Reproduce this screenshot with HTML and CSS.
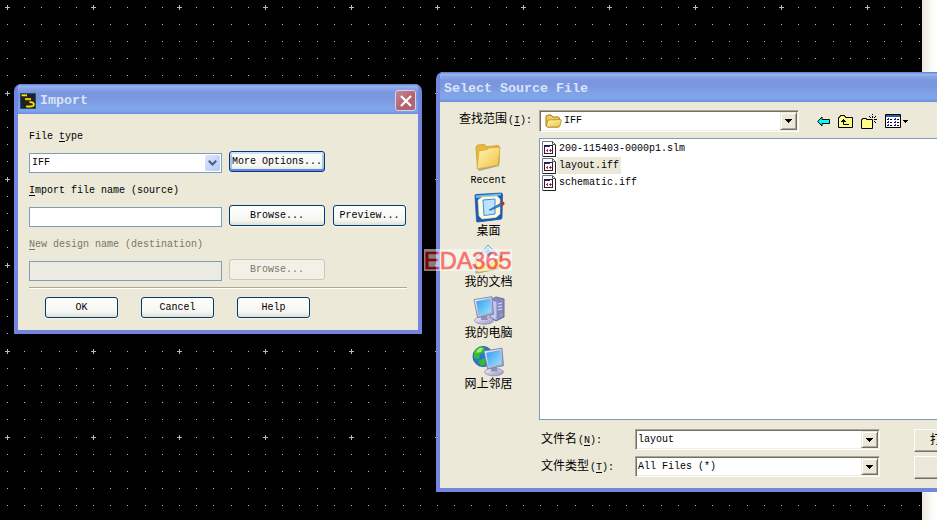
FILE: index.html
```html
<!DOCTYPE html>
<html lang="zh-CN">
<head>
<meta charset="utf-8">
<title>Import</title>
<link rel="stylesheet" href="styles.css">
</head>
<body>
<svg class="symbols" width="0" height="0" aria-hidden="true">
  <defs>
    <linearGradient id="gold" x1="0" y1="0" x2="1" y2="1"><stop offset="0" stop-color="#fff6b8"/><stop offset="1" stop-color="#f0c040"/></linearGradient>
    <linearGradient id="screen" x1="0" y1="0" x2="1" y2="1"><stop offset="0" stop-color="#2f9cf0"/><stop offset="1" stop-color="#9ee6ff"/></linearGradient>
    <linearGradient id="metal" x1="0" y1="0" x2="1" y2="1"><stop offset="0" stop-color="#f4f4fc"/><stop offset="1" stop-color="#9494c0"/></linearGradient>
    <pattern id="dither" width="2" height="2" patternUnits="userSpaceOnUse"><path d="M0 0h2v2H0z" fill="#ff6"/><path d="M0 0h1v1H0zM1 1h1v1H1z" fill="#fff9b0"/></pattern>
    <symbol id="file" viewBox="0 0 14 16">
      <path d="M.5.5h10l3 3v12H.5z" fill="#fff" stroke="#777"/><path d="M10.5.5v3h3" fill="none" stroke="#555"/><path d="M1 15.500h12.500V4" fill="none" stroke="#222"/>
      <path d="M2 4h9v9H2z" fill="#223"/><path d="M3 6h7v6H3z" fill="#fff"/><path d="M3 5h5v1H3z" fill="#22c"/><path d="M8 5h2v1H8z" fill="#fff"/><path d="M4 9h1V8h1v3H5v-1H4z" fill="#d22"/><path d="M7 9h1V8h1v1h1v1H9v1H8v-1H7z" fill="#e33"/><path d="M8 9h1v1H8z" fill="#22c"/>
    </symbol>
    <symbol id="drop" viewBox="0 0 7 4"><path d="M0 0h7v1H6v1H5v1H4v1H3V3H2V2H1V1H0z" fill="#000"/></symbol>
    <symbol id="monitor" viewBox="0 0 22 29">
      <ellipse cx="11" cy="24.500" rx="9.500" ry="3.800" fill="url(#metal)" stroke="#8585b2" stroke-width=".7"/><path d="M8 18h5l2 6H8z" fill="#8e90bb"/><path d="M1 3.500 19 .7l1.500 17.500-16 3.300z" fill="url(#metal)" stroke="#7178ad" stroke-width=".8"/><path d="M3.200 5.200 17.300 2.800l1.100 13.700-12.700 2.600z" fill="url(#screen)"/>
    </symbol>
  </defs>
</svg>
<main class="desktop">
  <svg class="grid" width="922" height="520">
    <defs><pattern id="dots" x="3" y="3" width="86" height="86" patternUnits="userSpaceOnUse">
      <g fill="#b8b8b8"><path d="M21 4h1v1h-1zM38 4h1v1h-1zM56 4h1v1h-1zM73 4h1v1h-1z"/>
      <path d="M4 21h1v1H4zM21 21h1v1h-1zM38 21h1v1h-1zM56 21h1v1h-1zM73 21h1v1h-1z"/>
      <path d="M4 38h1v1H4zM21 38h1v1h-1zM38 38h1v1h-1zM56 38h1v1h-1zM73 38h1v1h-1z"/>
      <path d="M4 55h1v1H4zM21 55h1v1h-1zM38 55h1v1h-1zM56 55h1v1h-1zM73 55h1v1h-1z"/>
      <path d="M4 72h1v1H4zM21 72h1v1h-1zM38 72h1v1h-1zM56 72h1v1h-1zM73 72h1v1h-1z"/>
      <path d="M2 4h5v1H2zM4 2h1v5H4z"/></g></pattern></defs>
    <rect width="922" height="520" fill="#000"/><rect width="922" height="520" fill="url(#dots)"/>
  </svg>

  <section class="window import">
    <header class="titlebar">
      <svg class="app-icon" width="16" height="16" viewBox="0 0 16 16"><path d="M.5.500h15v15H.5z" fill="#222220" stroke="#125080"/><path d="M2 2.500h5M5 6.200h6M9.500 9c3 0 4.500 1 4.500 2.500s-2 2-4 2H6.500" fill="none" stroke="#806500" stroke-width="2.400"/><path d="M1.500 2.300H7M5 6h6M9.500 9c3 0 4.300 1 4.300 2.400s-1.800 2-3.800 2H6" fill="none" stroke="#ffe000" stroke-width="1.500"/></svg>
      <h1 class="title">Import</h1>
      <span class="close"><svg width="12" height="12" viewBox="0 0 12 12"><path d="m1 1 10 10M11 1 1 11" stroke="#fff" stroke-width="2.200"/></svg></span>
    </header>
    <div class="body">
      <div class="block">
        <label class="label">File <u>t</u>ype</label>
        <div class="fields">
          <div class="field">IFF<span class="xp-drop"><svg width="9" height="6" viewBox="0 0 9 6"><path d="m.8.800 3.700 3.700L8.200.8" fill="none" stroke="#4d6185" stroke-width="2.200"/></svg></span></div>
          <span class="button wide focused">More Options...</span>
        </div>
      </div>
      <div class="block">
        <label class="label"><u>I</u>mport file name (source)</label>
        <div class="fields"><div class="field"></div><span class="button wide">Browse...</span><span class="button">Preview...</span></div>
      </div>
      <div class="block disabled">
        <label class="label"><u>N</u>ew design name (destination)</label>
        <div class="fields"><div class="field"></div><span class="button wide">Browse...</span></div>
      </div>
      <div class="rule"></div>
      <div class="actions"><span class="button">OK</span><span class="button">Cancel</span><span class="button">Help</span></div>
    </div>
  </section>

  <section class="window select">
    <header class="titlebar"><h2 class="title">Select Source File</h2></header>
    <div class="chooser">
      <div class="lookup">
        <span class="lookup-label">查找范围<i>(<u>I</u>):</i></span>
        <div class="combo folder-combo">
          <svg width="17" height="14" viewBox="0 0 17 14"><path d="M1 3q0-2 2-2h3l2 2h5q1.500 0 1.500 2v7q-.5 1-1.500 1H3q-2 0-2-2z" fill="#f2cc54" stroke="#a57b13"/><path d="m3 6 12.500-.5q1 0 .7 1.500l-1.400 5q-.3 1-1.300 1H2q-1-.5-.5-2z" fill="url(#gold)" stroke="#b38a22" stroke-width=".8"/></svg>
          <span class="combo-text">IFF</span><span class="combo-button"><svg width="7" height="4"><use href="#drop"/></svg></span>
        </div>
        <div class="tools">
          <svg width="13" height="11" viewBox="0 0 13 11"><path d="M.7 5.500 5 1v2.500h7.500v4H5V10z" fill="#00ffff" stroke="#000"/></svg>
          <svg width="15" height="13" viewBox="0 0 15 13"><path d="M.5 2.500h1v-1h1v-1h4v1h1v1h7v10H.5z" fill="url(#dither)" stroke="#000"/><path d="M5.500 5v4.500H11M3 6.500h5M4 5.500h3M5 4.500h1" fill="none" stroke="#000"/></svg>
          <svg width="16" height="15" viewBox="0 0 16 15"><path d="M.5 5.500h1v-1h4v1h6v9H.5z" fill="url(#dither)" stroke="#000"/><path d="M11.500 0v1M11.500 2v2M8 2l2 2M15 2l-2 2M8 5.500h2M13 5.500h3M13 7l2 2M11.500 7v2" stroke="#000"/></svg>
          <span class="view"><svg width="16" height="14" viewBox="0 0 16 14"><path d="M.5.500h15v13H.5z" fill="#fff" stroke="#000"/><path d="M1 1h14v2H1z" fill="#2860a8"/><path d="M2 5h2v1H2zM2 8h2v1H2zM2 11h2v1H2zM9 5h2v1H9zM9 8h2v1H9zM9 11h2v1H9z" fill="#000080"/><path d="M3 4h1v2H3zM3 7h1v2H3zM3 10h1v2H3zM10 4h1v2h-1zM10 7h1v2h-1zM10 10h1v2h-1z" fill="#22a"/><path d="M5 5h2v1H5zM5 8h2v1H5zM5 11h2v1H5zM12 5h2v1h-2zM12 8h2v1h-2zM12 11h2v1h-2z"/></svg>
          <svg width="5" height="3" viewBox="0 0 5 3"><path d="M0 0h5v1H4v1H3v1H2V2H1V1H0z"/></svg></span>
        </div>
      </div>
      <nav class="places">
        <div class="place"><svg width="34" height="32" viewBox="0 0 34 32"><path d="m7 28 20-4 2-12-1 13-20 5z" fill="#8a8878" opacity=".7"/><path d="m5 6 1.500-2 7-.5 2 2.300L27 4.500q1 0 1 1V23L6.500 27z" fill="#e9b93c" stroke="#c99a29" stroke-width=".8"/><path d="m8 10 8-1.500 2-1.500 11-.8-2 17.800-21 4z" fill="url(#gold)" stroke="#d6a93a" stroke-width=".8"/></svg><span class="latin">Recent</span></div>
        <div class="place"><svg width="34" height="32" viewBox="0 0 34 32"><path d="M3 3.500q0-1 1-1L29 1q1.500 0 1.500 1.500l-.5 23q0 1.500-1.500 1.700L6 30q-1.500.2-1.500-1.200z" fill="#1c5cb8" stroke="#174c9b" stroke-width=".7"/><path d="M3.500 3.500 29 1.500v2L4 6z" fill="#69bff5"/><path d="m6 8 4-3 15-1 3 3v15l-4 3.500L10 27l-3-3z" fill="#fffbe0" stroke="#e0d89a" stroke-width=".6"/><path d="m11 8 12-1v15l-11 1.500z" fill="#bce2ff" stroke="#348fdc"/><path d="m17 18 12-7 1.500 2L19 18z" fill="#3a87d0" stroke="#285e9c" stroke-width=".7"/><circle cx="30.500" cy="11.500" r="2" fill="#b63424"/></svg>桌面</div>
        <div class="place"><svg width="34" height="32" viewBox="0 0 34 32"><path d="M5 16 17 2l13 13-3 11-22 4z" fill="#d7ebfa" stroke="#69a9dc"/><path d="m10 12 7-8 9 10-8 7z" fill="#fff"/><path d="m13 9 4-4 5 5-4 4z" fill="#79c5f5"/><path d="m4 16 13 7 14-10-3 12-21 5z" fill="url(#gold)" stroke="#d39d34" stroke-width=".8"/></svg>我的文档</div>
        <div class="place"><svg width="34" height="32" viewBox="0 0 34 32"><path d="m19 6 6-3 8 2v18l-8 4-6-4z" fill="#8589bd" stroke="#676ba1"/><path d="m19.500 6 6 2v18l-6-3z" fill="#c3c6ed"/><path d="m27 10 4-1M27 13l4-1M27 16l4-1" stroke="#dfe1ff"/><circle cx="30" cy="21" r="1" fill="#5de53f"/><svg x="2" y="2" width="22" height="29"><use href="#monitor"/></svg></svg>我的电脑</div>
        <div class="place"><svg width="34" height="32" viewBox="0 0 34 32"><circle cx="12" cy="11.500" r="10" fill="#2778d5" stroke="#245ea7"/><path d="M3 7q4-6 10-5l1 5-5 2-1 5-5-1zM7 16l7-3v7l-4 1z" fill="#34bd2e"/><path d="M6 5q3-3 6-2l-2 4-5 1z" fill="#a2ec71"/><svg x="12" y="2" width="22" height="30"><use href="#monitor"/></svg></svg>网上邻居</div>
      </nav>
      <div class="files">
        <div class="file"><svg width="14" height="16"><use href="#file"/></svg><span class="name">200-115403-0000p1.slm</span></div>
        <div class="file chosen"><svg width="14" height="16"><use href="#file"/></svg><span class="name">layout.iff</span></div>
        <div class="file"><svg width="14" height="16"><use href="#file"/></svg><span class="name">schematic.iff</span></div>
      </div>
      <div class="entry">
        <span>文件名<i>(<u>N</u>):</i></span>
        <div class="combo"><span class="combo-text">layout</span><span class="combo-button"><svg width="7" height="4"><use href="#drop"/></svg></span></div>
        <span class="classic">打</span>
        <span>文件类型<i>(<u>T</u>):</i></span>
        <div class="combo"><span class="combo-text">All Files (*)</span><span class="combo-button"><svg width="7" height="4"><use href="#drop"/></svg></span></div>
        <span class="classic"></span>
      </div>
    </div>
  </section>
  <div class="watermark">EDA365</div>
</main>
</body>
</html>
```

FILE: styles.css
```css
* { box-sizing: border-box; }
body { margin: 0; overflow: hidden; font: 10px/14px "Liberation Mono", "Noto Sans CJK SC", monospace; color: #000; }
svg { display: block; flex: none; }
i { font-style: normal; }
u { text-underline-offset: 2px; text-decoration-thickness: 1px; }
.symbols { position: absolute; }
.desktop { position: relative; width: 937px; height: 520px; overflow: hidden; background: linear-gradient(90deg, #ece8e0 922px, #fcfbf6 932px, #fff); }

.window { position: absolute; display: flex; flex-direction: column; overflow: hidden; background: #ece9d8; border: solid #7385df; border-width: 0 4px 4px; }
.window::after { content: ""; position: absolute; inset: 0 -4px -4px; border: solid #504fb4; border-width: 0 1px 1px; border-left-color: #5558c8; border-radius: 7px 7px 0 0; pointer-events: none; }
.import { left: 14px; top: 84px; width: 408px; height: 250px; border-radius: 7px 7px 0 0; }
.select { left: 436px; top: 72px; width: 505px; height: 420px; border-radius: 7px 0 0 0; }
.titlebar { flex: none; display: flex; align-items: center; height: 30px; margin: 0 -4px; padding: 3px 6px 0; background: linear-gradient(#6989dc 0 1px, #9db8f0 2px, #8ca7e8 4px, #7b97e0 8px, #7a96df 14px, #80a4e8 22px, #7fa5e8 27px, #728bdc 30px); }
.title { flex: 1; margin: 0; font: bold 13.33px/18px "Liberation Mono", monospace; color: #d8e4f8; }
.app-icon { margin-right: 4px; }
.select .titlebar { padding-left: 8px; }
.close { display: grid; place-items: center; width: 21px; height: 21px; border: 1px solid #d5d1e8; border-radius: 3px; background: linear-gradient(135deg, #c48795, #b4606d 60%, #b06878); }

.body { padding: 15px 11px 0; }
.block { display: flex; flex-direction: column; gap: 8px; margin-bottom: 10px; }
.label { height: 14px; padding-top: 1px; white-space: pre; }
.fields { display: flex; height: 22px; }
.field { display: flex; align-items: center; justify-content: space-between; width: 193px; height: 20px; margin: 2px 7px 0 0; padding: 0 1px 0 2px; border: 1px solid #7f9db9; background: #fff; }
.xp-drop { display: grid; place-items: center; width: 15px; height: 16px; border-radius: 2px; background: linear-gradient(135deg, #dce6fd, #b5c9f8); }
.button { display: grid; place-items: center; width: 73px; height: 21px; border: 1px solid #003c74; border-radius: 3px; background: linear-gradient(#fff, #f5f5f1 75%, #e2dfd5); box-shadow: 0 1px 0 #f8f6ed; white-space: nowrap; }
.button.wide { width: 96px; margin-right: 8px; }
.button.focused { box-shadow: inset 0 2px #cee1fc, inset 0 -2px #6982ee, inset 2px 0 #a9c3f3, inset -2px 0 #a9c3f3; }
.disabled { color: #77776c; margin-bottom: 6px; }
.disabled .field { background: #ebebe4; }
.disabled .button { border-color: #c9c7ba; background: #f3f1e7; box-shadow: none; }
.rule { width: 378px; height: 2px; background: #aca899; border-bottom: 1px solid #fff; }
.actions { display: flex; gap: 23px; padding: 8px 0 0 16px; }

.chooser { display: grid; grid-template-columns: 99px 1fr; grid-template-rows: 36px 282px 68px; flex: 1; font-size: 12px; }
.chooser i, .latin, .name, .combo-text { font-size: 10px; }
.chooser i { margin-left: 1px; }
.lookup { grid-column: 1 / -1; display: flex; align-items: flex-start; padding: 8px 0 0 19px; }
.lookup-label { width: 80px; padding-top: 3px; white-space: nowrap; }
.combo { display: flex; align-items: center; width: 245px; height: 22px; padding: 0 1px 0 2px; border: 1px solid; border-color: #aca899 #fff #fff #aca899; background: #fff; box-shadow: inset 1px 1px #716f64, inset -1px -1px #f1efe2; }
.folder-combo { width: 260px; padding-left: 5px; gap: 2px; }
.combo-text { flex: 1; }
.combo-button { display: grid; place-items: center; width: 17px; height: 18px; background: #ece9d8; border: 1px solid; border-color: #ece9d8 #716f64 #716f64 #ece9d8; box-shadow: inset 1px 1px #fff, inset -1px -1px #aca899; }
.tools { display: flex; align-items: center; height: 22px; gap: 8px; padding-left: 18px; }
.view { display: flex; align-items: center; gap: 2px; }
.places { display: flex; flex-direction: column; align-items: center; padding: 3px 2px 0 0; }
.place { display: flex; flex-direction: column; align-items: center; height: 51px; line-height: 16px; }
.files { border: 1px solid #7f9db9; border-right: 0; background: #fff; padding-top: 1px; }
.file { display: flex; align-items: center; height: 17px; padding-left: 2px; gap: 1px; }
.name { height: 17px; padding: 2px 2px 0; line-height: 14px; }
.chosen .name { background: #ece9d8; }
.entry { grid-column: 2; display: grid; grid-template-columns: 94px 245px 74px; grid-template-rows: 22px 22px; row-gap: 5px; padding: 9px 0 0 2px; white-space: nowrap; line-height: 22px; }
.entry .combo { height: 21px; }
.entry .combo-button { height: 17px; }
.classic { height: 23px; margin-left: 34px; padding-left: 15px; border: 1px solid; border-color: #fff #716f64 #716f64 #fff; box-shadow: inset 0 -1px #aca899; overflow: hidden; }

.watermark { position: absolute; left: 424px; top: 249px; width: 88px; height: 22px; font: 23.5px/24px "Liberation Sans", sans-serif; -webkit-text-stroke: .7px #f00; color: #f00; background: #fff; opacity: .5; }
```
